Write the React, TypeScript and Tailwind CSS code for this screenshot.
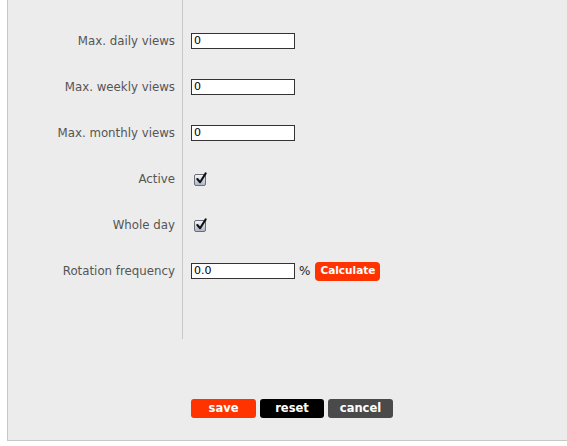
import React from "react";

const font = { fontFamily: '"DejaVu Sans", Verdana, sans-serif' };

function Check() {
  return (
    <span className="relative inline-block w-[12px] h-[12px] rounded-[2px] border border-[#6b6f78] bg-gradient-to-b from-[#f4f6fa] to-[#aeb6c6]">
      <svg viewBox="0 0 14 14" className="absolute left-[0px] top-[-3px] w-[13px] h-[13px]">
        <path d="M2.5 7.5 L5.5 11 L11.5 1.5" fill="none" stroke="#111" strokeWidth="2.2" strokeLinecap="round" strokeLinejoin="round" />
      </svg>
    </span>
  );
}

function Row({ label, children }: { label: string; children: React.ReactNode }) {
  return (
    <div className="flex h-[46px] items-center">
      <div className="w-[175px] pr-[8px] pt-[2px] text-right text-[11.8px] text-[#555]">{label}</div>
      <div className="flex items-center pl-[8px]">{children}</div>
    </div>
  );
}

function Input({ value }: { value: string }) {
  return (
    <div className="w-[104px] h-[16px] border border-[#333] bg-white pl-[2px] text-[11px] leading-[14px] text-[#000]">{value}</div>
  );
}

export default function App() {
  return (
    <div className="w-[567px] h-[446px] bg-white overflow-hidden" style={font}>
      <div className="ml-[7px] w-[600px] h-[441px] bg-[#ececec] border-l border-b border-[#c8c8c8] flex flex-col">
        <div className="relative pt-[18px] h-[339px]">
          <div className="absolute left-[174px] top-0 h-[339px] w-px bg-[#c8c8c8]" />
          <Row label="Max. daily views"><Input value="0" /></Row>
          <Row label="Max. weekly views"><Input value="0" /></Row>
          <Row label="Max. monthly views"><Input value="0" /></Row>
          <Row label="Active"><span className="ml-[3px] mt-[1px] flex"><Check /></span></Row>
          <Row label="Whole day"><span className="ml-[3px] mt-[1px] flex"><Check /></span></Row>
          <Row label="Rotation frequency">
            <Input value="0.0" />
            <span className="ml-[4px] text-[12px] text-[#222]">%</span>
            <span className="ml-[5px] w-[65px] h-[19px] rounded-[4px] bg-[#ff3300] text-white font-bold text-[10.5px] flex items-center justify-center">Calculate</span>
          </Row>
        </div>
        <div className="mt-[60px] flex gap-[4px] pl-[183px]">
          <span className="w-[65px] h-[19px] rounded-[3px] bg-[#ff3300] text-white font-bold text-[11.5px] flex items-center justify-center">save</span>
          <span className="w-[64px] h-[19px] rounded-[3px] bg-black text-white font-bold text-[11.5px] flex items-center justify-center">reset</span>
          <span className="w-[65px] h-[19px] rounded-[3px] bg-[#4a4a4a] text-white font-bold text-[11.5px] flex items-center justify-center">cancel</span>
        </div>
      </div>
    </div>
  );
}
